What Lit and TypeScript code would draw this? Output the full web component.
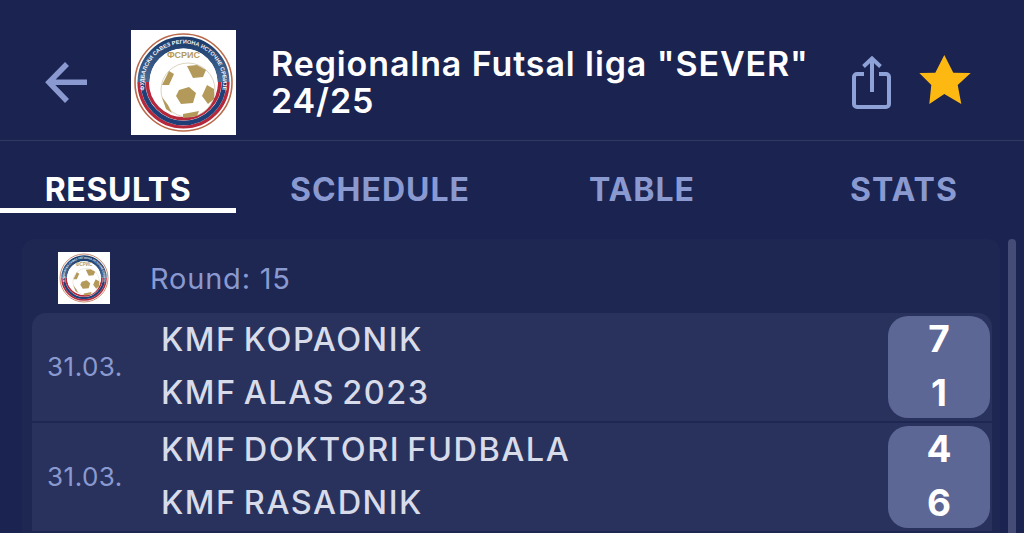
import { LitElement, html, css } from "lit";
import { customElement, property } from "lit/decorators.js";

@customElement("league-logo")
class LeagueLogo extends LitElement {
  static styles = css`
    :host { display: block; background: #fff; }
    svg { display: block; width: 100%; height: 100%; }
    text { font-family: "Liberation Sans", sans-serif; }
    .arc { font-size: 5.6px; font-weight: 700; fill: #f2f5fa; }
    .abbr { font-size: 9px; font-weight: 700; fill: #b49a5a; }
  `;
  render() {
    return html`<svg viewBox="0 0 105 105" aria-hidden="true">
      <defs>
        <path id="a" d="M 14 62 A 39.5 39.5 0 1 1 91 62"></path>
        <linearGradient id="g" x1="0" y1="0" x2="0" y2="1">
          <stop offset="0" stop-color="#1e3f6e"></stop>
          <stop offset="0.72" stop-color="#5d7fa8"></stop>
          <stop offset="0.9" stop-color="#d6dfe9"></stop>
          <stop offset="1" stop-color="#f4f6f9"></stop>
        </linearGradient>
        <clipPath id="t"><rect x="0" y="0" width="105" height="52"></rect></clipPath>
        <clipPath id="b"><rect x="0" y="52" width="105" height="53"></rect></clipPath>
      </defs>
      <circle cx="52.5" cy="52.5" r="48.5" fill="#fff" stroke="#b96a4a" stroke-width="1.6"></circle>
      <g clip-path="url(#b)" fill="none">
        <circle cx="52.5" cy="52.5" r="44.5" stroke="#b5273a" stroke-width="3.2"></circle>
        <circle cx="52.5" cy="52.5" r="40.5" stroke="#1f3f78" stroke-width="4.6"></circle>
        <circle cx="52.5" cy="52.5" r="36.2" stroke="#b5273a" stroke-width="3.4"></circle>
      </g>
      <g clip-path="url(#t)">
        <circle cx="52.5" cy="52.5" r="40" fill="none" stroke="url(#g)" stroke-width="12"></circle>
      </g>
      <circle cx="52.5" cy="52.5" r="34" fill="#fff"></circle>
      <text class="arc"><textPath href="#a" startOffset="50%" text-anchor="middle">ФУДБАЛСКИ САВЕЗ РЕГИОНА ИСТОЧНЕ СРБИЈЕ</textPath></text>
      <text class="abbr" x="52.5" y="28" text-anchor="middle">ФСРИС</text>
      <circle cx="57" cy="60" r="27" fill="#fff" stroke="#c8c2a8" stroke-width="0.7"></circle>
      <g fill="#b49a5a">
        <polygon points="48,60 58,57 65,63 62,73 50,74 45,66"></polygon>
        <polygon points="56,36 66,35 75,40 72,47 62,48"></polygon>
        <polygon points="38,41 43,44 38,55 31,55"></polygon>
        <polygon points="76,55 83,59 83,69 77,74 71,66"></polygon>
        <polygon points="31,67 37,75 41,83 35,79"></polygon>
        <polygon points="52,84 68,81 66,86 52,88"></polygon>
      </g>
    </svg>`;
  }
}

@customElement("match-row")
class MatchRow extends LitElement {
  @property() date = "";
  @property() home = "";
  @property() away = "";
  @property() hs = "";
  @property() as = "";
  static styles = css`
    :host { display: grid; grid-template-columns: 129px 1fr 102px; align-items: center; height: 108px; padding-right: 2px; background: #29325c; }
    .date { padding: 0 0 2px 15px; font-size: 26px; color: #8a9ad0; letter-spacing: 0.5px; }
    .teams { display: grid; gap: 16px; padding-bottom: 2px; font-size: 32.5px; line-height: 37px; letter-spacing: 1.5px; word-spacing: -3px; font-weight: 500; color: #d8dbe9; white-space: nowrap; }
    .score { display: grid; align-content: center; gap: 18px; box-sizing: border-box; height: 102px; padding-bottom: 3px; border-radius: 20px; background: #5d6796; color: #fff; font-size: 37px; line-height: 36px; font-weight: 700; text-align: center; }
  `;
  render() {
    return html`<div class="date">${this.date}</div>
      <div class="teams"><span>${this.home}</span><span>${this.away}</span></div>
      <div class="score"><span>${this.hs}</span><span>${this.as}</span></div>`;
  }
}

@customElement("app-root")
class AppRoot extends LitElement {
  static styles = css`
    :host { display: block; position: relative; height: 533px; overflow: hidden; background: #1b2350; font-family: Inter, sans-serif; }
    header { display: flex; align-items: center; height: 116px; padding-top: 24px; border-bottom: 1px solid #31395f; }
    .back { width: 44px; height: 44px; margin-left: 44px; flex: none; }
    .logo { width: 105px; height: 105px; margin-left: 43px; flex: none; }
    h1 { width: 545px; flex: none; margin: -1px 0 0 35px; font-size: 34px; line-height: 37px; letter-spacing: 0.9px; font-weight: 600; color: #fff; }
    .share { width: 42px; height: 54px; flex: none; margin-left: 35px; }
    .star { width: 54px; height: 54px; flex: none; margin-left: 25px; }
    nav { display: grid; grid-template-columns: repeat(4, 236px); gap: 26px; height: 72px; }
    nav div { display: flex; align-items: center; justify-content: center; box-sizing: border-box; padding-top: 24px; height: 72px; font-size: 32px; letter-spacing: 1px; font-weight: 700; color: #8a9ad0; }
    nav .on { padding-top: 29px; color: #fff; border-bottom: 5px solid #fff; letter-spacing: 0.6px; }
    .panel { margin: 26px 24px 0 22px; height: 320px; background: #1e2652; border-radius: 12px 12px 0 0; padding: 13px 0 0; }
    .head { display: flex; align-items: center; gap: 40px; padding-left: 36px; height: 52px; margin-bottom: 9px; }
    .head league-logo { width: 52px; height: 52px; flex: none; }
    .round { font-size: 29px; letter-spacing: 0.8px; color: #8a9ad0; }
    .rows { display: grid; gap: 2px; margin: 0 8px 0 10px; }
    match-row:first-child { border-radius: 14px 14px 0 0; }
    .bar { position: absolute; left: 1008px; top: 239px; width: 8px; height: 300px; border-radius: 4px 4px 0 0; background: #454c76; }
  `;
  render() {
    return html`
      <header>
        <svg class="back" viewBox="0 0 44 44" fill="none" stroke="#8a9ad0" stroke-width="5.5" aria-hidden="true">
          <path d="M43 22.3H6M23 4 5 22.3 23 41"></path>
        </svg>
        <league-logo class="logo"></league-logo>
        <h1>Regionalna Futsal liga "SEVER" 24/25</h1>
        <svg class="share" viewBox="0 0 42 54" fill="none" stroke="#8fa2d8" stroke-width="4" aria-hidden="true">
          <path d="M13 19H6a3 3 0 0 0-3 3v27a3 3 0 0 0 3 3h29a3 3 0 0 0 3-3V22a3 3 0 0 0-3-3h-7"></path>
          <path d="M21 37V3M12.5 11.5 21 3.5l8.5 8"></path>
        </svg>
        <svg class="star" viewBox="0 0 54 54" aria-hidden="true">
          <polygon fill="#fdb912" points="26.3,0 35.3,17.7 52.7,18 39.7,30 43.3,49 26.3,39 11.3,49 13.3,30 1.3,18 17.3,17.7"></polygon>
        </svg>
      </header>
      <nav>
        <div class="on">RESULTS</div>
        <div>SCHEDULE</div>
        <div>TABLE</div>
        <div>STATS</div>
      </nav>
      <section class="panel">
        <div class="head"><league-logo></league-logo><span class="round">Round: 15</span></div>
        <div class="rows">
          <match-row date="31.03." home="KMF KOPAONIK" away="KMF ALAS 2023" hs="7" as="1"></match-row>
          <match-row date="31.03." home="KMF DOKTORI FUDBALA" away="KMF RASADNIK" hs="4" as="6"></match-row>
        </div>
      </section>
      <div class="bar"></div>
    `;
  }
}
